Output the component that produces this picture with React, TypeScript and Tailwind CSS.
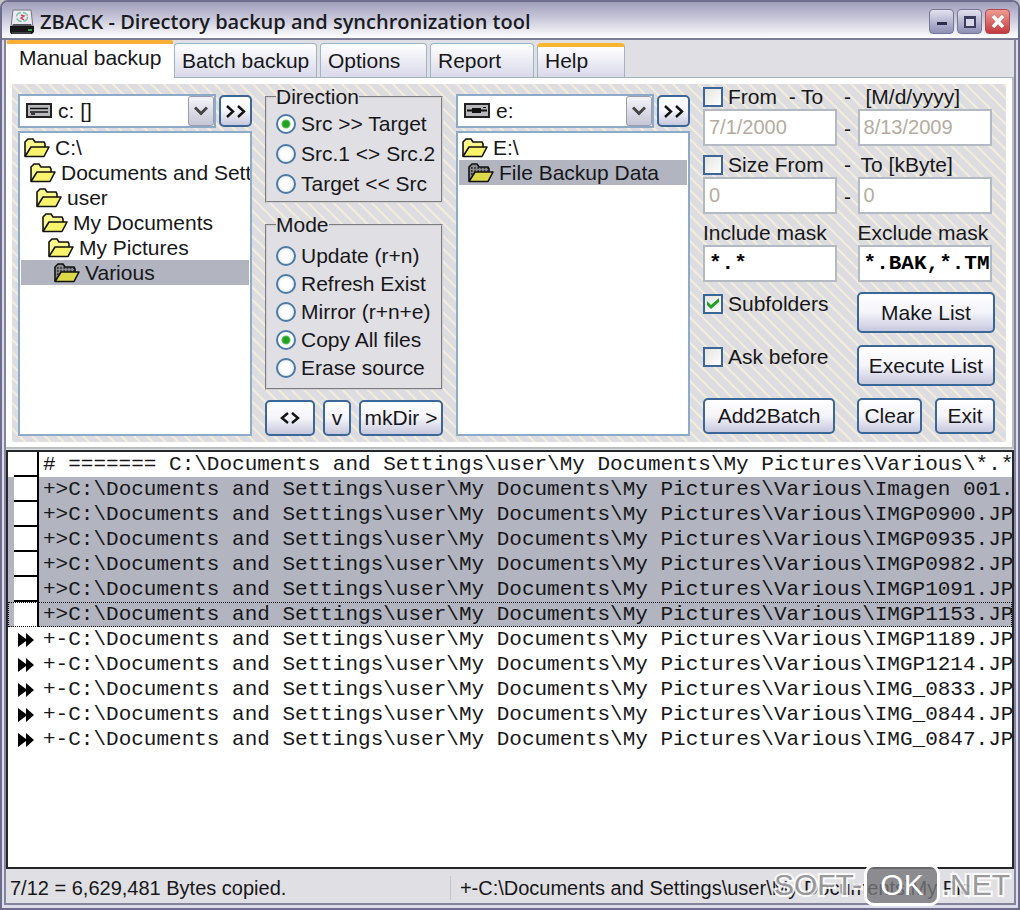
import { useState } from 'react';
import type { ReactNode } from 'react';
import clsx from 'clsx';

const TABS = [
  { name: 'Manual backup', width: 'w-[168px]' },
  { name: 'Batch backup', width: 'w-[143px]' },
  { name: 'Options', width: 'w-[107px]' },
  { name: 'Report', width: 'w-[104px]' },
  { name: 'Help', width: 'w-[88px]' },
];

const DIRECTIONS = ['Src >> Target', 'Src.1 <> Src.2', 'Target << Src'];
const MODES = ['Update (r+n)', 'Refresh Exist', 'Mirror (r+n+e)', 'Copy All files', 'Erase source'];

const SOURCE_TREE = [
  { name: 'C:\\', indent: 'pl-[3px]' },
  { name: 'Documents and Settings', indent: 'pl-[9px]' },
  { name: 'user', indent: 'pl-[15px]' },
  { name: 'My Documents', indent: 'pl-[21px]' },
  { name: 'My Pictures', indent: 'pl-[27px]' },
  { name: 'Various', indent: 'pl-[33px]', selected: true },
];

const TARGET_TREE = [
  { name: 'E:\\', indent: 'pl-[3px]' },
  { name: 'File Backup Data', indent: 'pl-[9px]', selected: true },
];

const FOLDER = 'C:\\Documents and Settings\\user\\My Documents\\My Pictures\\Various\\';

const FILES = [
  { name: 'Imagen 001.jpg', copied: true },
  { name: 'IMGP0900.JPG', copied: true },
  { name: 'IMGP0935.JPG', copied: true },
  { name: 'IMGP0982.JPG', copied: true },
  { name: 'IMGP1091.JPG', copied: true },
  { name: 'IMGP1153.JPG', copied: true, focused: true },
  { name: 'IMGP1189.JPG' },
  { name: 'IMGP1214.JPG' },
  { name: 'IMG_0833.JPG' },
  { name: 'IMG_0844.JPG' },
  { name: 'IMG_0847.JPG' },
];

type TreeItem = { name: string; indent: string; selected?: boolean };

function AppIcon() {
  return (
    <svg width="26" height="26" viewBox="0 0 26 26" className="shrink-0">
      <path d="M4 1h18l2 17H2z" fill="#eceaf0" stroke="#77757f" />
      <path d="M1 17h24v6l-2 2H2l-1-2z" fill="#17171a" />
      <path d="M3 17l1-2h18l1 2z" fill="#55555c" />
      <ellipse cx="13" cy="8" rx="5.500" ry="4.500" fill="none" stroke="#7cc4a4" strokeWidth="1.500" strokeDasharray="6 2" />
      <path d="M12 6l3 1-3 2 3 2" fill="none" stroke="#d0405a" strokeWidth="1.500" />
      <path d="M19 21h4" stroke="#3fd06a" strokeWidth="1.5" />
      <path d="M3 24h19" stroke="#65656c" />
    </svg>
  );
}

function FolderIcon({ selected }: { selected?: boolean }) {
  return (
    <svg width="26" height="20" viewBox="0 0 26 20" className="shrink-0">
      <path
        d="M1 18V4l3-3h5l2 3h9l1 2v3"
        fill={selected ? '#8b8b90' : '#fbf78a'}
        stroke="#111"
        strokeWidth="1.6"
      />
      {selected && (
        <path d="M3 5h17M3 8h18M3 11h4" stroke="#1c1c1c" strokeWidth="1.6" strokeDasharray="1.6 1.6" />
      )}
      <path
        d="M1 18.500L7 9h18l-5 9.500z"
        fill={selected ? '#dcd84a' : '#f8f36a'}
        stroke="#111"
        strokeWidth="1.6"
        strokeLinejoin="round"
      />
    </svg>
  );
}

function DriveIcon({ removable }: { removable?: boolean }) {
  return (
    <svg width="26" height="16" viewBox="0 0 26 16" className="shrink-0">
      <rect x="1" y="1" width="24" height="13" fill="#b9b9bd" stroke="#222" strokeWidth="2" />
      {removable ? (
        <path d="M3 7.500h20M7 7.500h12" stroke="#111" strokeWidth="2" />
      ) : (
        <path d="M4 5.500h18M4 9h18" stroke="#111" strokeWidth="1.6" />
      )}
      {removable ? (
        <path d="M8 5h9v5H8zM19 4h3v1h-3z" fill="#111" />
      ) : (
        <path d="M5 11h4" stroke="#111" strokeWidth="1.6" />
      )}
    </svg>
  );
}

function SkipIcon() {
  return (
    <svg width="16" height="14" viewBox="0 0 16 14">
      <path d="M0 0l8 6V0l8 7-8 7V8l-8 6z" fill="#000" />
    </svg>
  );
}

function XpButton({ children, label, className }: { children: ReactNode; label?: string; className?: string }) {
  return (
    <button
      type="button"
      aria-label={label}
      className={clsx(
        'flex items-center justify-center whitespace-nowrap rounded-[5px] border-2 border-[#3a6797] bg-linear-to-b from-white via-[#f4f4fa] to-[#c8c8de]',
        className,
      )}
    >
      {children}
    </button>
  );
}

function DrivePicker({ label, drive, removable }: { label: string; drive: string; removable?: boolean }) {
  return (
    <div className="flex h-[34px] items-center gap-[3px]">
      <div className="relative flex h-full min-w-0 flex-1 items-center border-2 border-[#8dabc9] bg-white pl-[6px]">
        <DriveIcon removable={removable} />
        <select aria-label={label} className="h-full min-w-0 flex-1 appearance-none bg-transparent pl-[6px] outline-none">
          <option>{drive}</option>
        </select>
        <span className="pointer-events-none absolute top-0 right-0 flex h-full w-[26px] items-center justify-center rounded-[3px] border border-[#9a9ab0] bg-linear-to-b from-[#f4f4f8] to-[#c6c6d6]">
          <svg width="14" height="10" viewBox="0 0 14 10">
            <path d="M1 1.500l6 6 6-6" fill="none" stroke="#444" strokeWidth="3" />
          </svg>
        </span>
      </div>
      <XpButton label="Browse" className="h-[32px] w-[33px]">
        <svg width="20" height="13" viewBox="0 0 20 13">
          <path d="M1 1l6 5.500L1 12M12 1l6 5.500-6 5.500" fill="none" stroke="#111" strokeWidth="2.400" />
        </svg>
      </XpButton>
    </div>
  );
}

function FolderTree({ items }: { items: TreeItem[] }) {
  return (
    <ul className="flex-1 overflow-hidden border-2 border-[#8dabc9] bg-white px-[1px] pt-[2px]">
      {items.map((item) => (
        <li
          key={item.name}
          className={clsx(
            'flex h-[25px] items-center gap-[5px] whitespace-nowrap',
            item.indent,
            item.selected && 'bg-[#b2b4bf]',
          )}
        >
          <FolderIcon selected={item.selected} />
          {item.name}
        </li>
      ))}
    </ul>
  );
}

function RadioGroup({ title, name, options, initial, className }: {
  title: string;
  name: string;
  options: string[];
  initial: string;
  className: string;
}) {
  const [value, setValue] = useState(initial);

  return (
    <fieldset className="min-w-0 border-2 border-[#cfcfd4] bg-[#e0dfe4] pl-[9px] [border-style:groove]">
      <legend className="leading-[24px]">{title}</legend>
      <div className={clsx('flex flex-col', className)}>
        {options.map((option) => (
          <label key={option} className="flex h-[24px] items-center gap-[5px] whitespace-nowrap">
            <input
              type="radio"
              name={name}
              checked={value === option}
              onChange={() => setValue(option)}
              className="size-[20px] shrink-0 appearance-none rounded-full border-2 border-[#4a7ba8] bg-[radial-gradient(circle,#fff_0_5px,#e6e6e6_9px)] checked:bg-[radial-gradient(circle,#22a022_0_3px,#5cc05c_4px,#fff_5px)]"
            />
            {option}
          </label>
        ))}
      </div>
    </fieldset>
  );
}

function CheckBox({ label, defaultChecked }: { label: string; defaultChecked?: boolean }) {
  return (
    <label className="relative flex h-[24px] items-center gap-[5px] whitespace-pre">
      <input
        type="checkbox"
        defaultChecked={defaultChecked}
        className="peer size-[20px] shrink-0 appearance-none border-2 border-[#3a6797] bg-linear-to-br from-[#e4e4e0] to-white"
      />
      <svg
        width="12"
        height="12"
        viewBox="0 0 12 12"
        className="pointer-events-none invisible absolute left-[4px] peer-checked:visible"
      >
        <path d="M0 3v4l4 4 8-7V0L4 7z" fill="#21a121" />
      </svg>
      {label}
    </label>
  );
}

function Field({ label, value, disabled }: { label: string; value: string; disabled?: boolean }) {
  return (
    <input
      type="text"
      aria-label={label}
      defaultValue={value}
      disabled={disabled}
      className={clsx(
        'h-[37px] w-full min-w-0 border-2 border-[#b3bac4] bg-white pl-[4px] outline-none',
        disabled
          ? 'text-[20px] text-[#b5aca0]'
          : 'font-["Liberation_Mono",monospace] text-[21px] font-bold text-black',
      )}
    />
  );
}

function Filters() {
  return (
    <div className="flex min-w-0 flex-col gap-[10px] pt-[1px]">
      <div className="grid grid-cols-[134fr_20fr_134fr] pr-[3px]">
        <CheckBox label="From  - To" />
        <span className="text-center">-</span>
        <span className="pl-[8px]">[M/d/yyyy]</span>
        <Field label="Date from" value="7/1/2000" disabled />
        <span className="pt-[8px] text-center">-</span>
        <Field label="Date to" value="8/13/2009" disabled />

        <div className="mt-[7px]">
          <CheckBox label="Size From" />
        </div>
        <span className="mt-[7px] text-center">-</span>
        <span className="mt-[7px] pl-[3px]">To [kByte]</span>
        <Field label="Size from" value="0" disabled />
        <span className="pt-[8px] text-center">-</span>
        <Field label="Size to" value="0" disabled />

        <span className="mt-[7px] whitespace-nowrap">Include mask</span>
        <span />
        <span className="mt-[7px] whitespace-nowrap">Exclude mask</span>
        <Field label="Include mask" value="*.*" />
        <span />
        <Field label="Exclude mask" value="*.BAK,*.TMP" />
      </div>

      <div className="grid grid-cols-[154fr_138fr] gap-y-[12px]">
        <CheckBox label="Subfolders" defaultChecked />
        <XpButton className="h-[41px]">Make List</XpButton>
        <CheckBox label="Ask before" />
        <XpButton className="h-[41px]">Execute List</XpButton>
        <XpButton className="mr-[22px] h-[36px]">Add2Batch</XpButton>
        <div className="flex justify-between">
          <XpButton className="h-[36px] w-[65px]">Clear</XpButton>
          <XpButton className="h-[36px] w-[60px]">Exit</XpButton>
        </div>
      </div>
    </div>
  );
}

function TitleBar() {
  return (
    <header className="flex h-[38px] shrink-0 items-center gap-[5px] border-b-2 border-[#7c7b98] bg-linear-to-b from-[#9f9eba] via-[#cdccdd] to-white pt-[3px] pr-[8px] pl-[7px]">
      <AppIcon />
      <h1 className='flex-1 truncate font-["Open_Sans",sans-serif] text-[20px] leading-[28px] font-semibold text-[#1b1b22]'>
        ZBACK - Directory backup and synchronization tool
      </h1>
      <div className="flex gap-[3px]">
        <button
          type="button"
          aria-label="Minimize"
          className="flex size-[25px] items-center justify-center rounded-[4px] border border-[#77779a] bg-linear-to-b from-[#e2e2ee] to-[#8f90b5]"
        >
          <span className="mt-[4px] h-[3px] w-[10px] bg-[#2c2c4c]" />
        </button>
        <button
          type="button"
          aria-label="Maximize"
          className="flex size-[25px] items-center justify-center rounded-[4px] border border-[#77779a] bg-linear-to-b from-[#e2e2ee] to-[#8f90b5]"
        >
          <span className="size-[12px] border-2 border-t-3 border-[#3c3c5e] bg-[#d8d8ea]" />
        </button>
        <button
          type="button"
          aria-label="Close"
          className="flex size-[25px] items-center justify-center rounded-[4px] border border-[#b04a50] bg-linear-to-b from-[#ec9b92] to-[#c23840]"
        >
          <svg width="14" height="13" viewBox="0 0 14 13">
            <path d="M2 1l10 11M12 1L2 12" stroke="#fff" strokeWidth="3.500" />
          </svg>
        </button>
      </div>
    </header>
  );
}

function TabBar() {
  const [active, setActive] = useState('Manual backup');

  return (
    <nav role="tablist" className="flex h-[38px] shrink-0 items-end gap-[3px] border-b border-[#a4b4b8]">
      {TABS.map((tab) => {
        const isActive = tab.name === active;
        return (
          <button
            key={tab.name}
            type="button"
            role="tab"
            aria-selected={isActive}
            onClick={() => setActive(tab.name)}
            className={clsx(
              'rounded-t-[4px] border border-b-0 text-left whitespace-nowrap',
              tab.width,
              isActive
                ? '-mr-[3px] -mb-[1px] h-[38px] border-t-4 border-white border-t-[#f9ae35] bg-white pb-[7px] pl-[12px]'
                : 'h-[34px] border-[#9fb4c4] bg-linear-to-b from-white to-[#d9d9ea] pl-[7px]',
              tab.name === 'Help' && 'border-t-4 border-t-[#fcb52c] pb-[3px]',
            )}
          >
            {tab.name}
          </button>
        );
      })}
    </nav>
  );
}

function FileList() {
  return (
    <ul className='flex-1 overflow-hidden border-2 border-[#26262a] bg-white font-["Liberation_Mono",monospace] text-[21px] leading-[25px] whitespace-pre'>
      <li className="flex h-[25px]">
        <span className="ml-[6px] w-[25px] shrink-0 border-r-2 border-b-2 border-black" />
        <span className="pl-[4px]"># ======= {FOLDER}*.*</span>
      </li>
      {FILES.map((file) => (
        <li
          key={file.name}
          className={clsx('relative flex h-[25px]', file.copied && 'bg-[#b2b4bf]')}
        >
          {file.copied ? (
            <span
              className={clsx(
                'ml-[6px] w-[25px] shrink-0 border-r-2 border-black bg-white',
                !file.focused && 'border-b-2',
              )}
            />
          ) : (
            <span className="flex w-[31px] shrink-0 items-center pl-[10px]">
              <SkipIcon />
            </span>
          )}
          <span className="pl-[4px]">
            {file.copied ? '+>' : '+-'}
            {FOLDER}
            {file.name}
          </span>
          {file.focused && <span className="absolute inset-0 border border-dotted border-black" />}
        </li>
      ))}
    </ul>
  );
}

function StatusBar() {
  return (
    <footer className="grid h-[34px] shrink-0 grid-cols-[443fr_563fr] items-center pt-[3px] text-[20px] whitespace-nowrap">
      <span className="overflow-hidden pl-[4px]">7/12 = 6,629,481 Bytes copied.</span>
      <span className="overflow-hidden border-l border-[#c4c3c8] pl-[9px]">
        +-C:\Documents and Settings\user\My Documents\My Pic
      </span>
    </footer>
  );
}

function Watermark() {
  return (
    <div className="pointer-events-none absolute right-[10px] bottom-[4px] flex items-center text-[30px] leading-[36px]">
      <span className="text-[#808084]/80 [-webkit-text-stroke:4px_#ffffffdd] [paint-order:stroke_fill]">SOFT-</span>
      <span className="mx-[2px] rounded-[10px] border-3 border-white bg-[#77777a]/80 px-[13px] text-white">OK</span>
      <span className="text-[#808084]/80 [-webkit-text-stroke:4px_#ffffffdd] [paint-order:stroke_fill]">.NET</span>
    </div>
  );
}

export default function App() {
  return (
    <div className='relative flex min-h-screen flex-col overflow-hidden bg-[#c6c6c8] font-["Liberation_Sans",Arial,sans-serif] text-[21px] leading-[24px] text-[#17171a]'>
      <div className="flex flex-1 flex-col overflow-hidden rounded-t-[8px] border-2 border-[#6d6c8c] bg-[#dddcea]">
        <TitleBar />
        <div className="mx-[2px] mb-[3px] flex flex-1 flex-col border-2 border-t-0 border-[#85849f] bg-[#e0dfe3]">
          <TabBar />
          <main className="border-r-2 border-b-2 border-[#b9bfbe] bg-white p-[6px] pb-[5px]">
            <div className="grid grid-cols-[234fr_178fr_234fr_292fr] gap-x-[13px] bg-[repeating-linear-gradient(45deg,#f3eddb_0_1px,#dddde1_2px_8px,#f3eddb_9px)] pr-[11px] pb-[6px] pl-[6px]">
              <section className="flex min-w-0 flex-col gap-[3px] pt-[10px]">
                <DrivePicker label="Source drive" drive="c: []" />
                <FolderTree items={SOURCE_TREE} />
              </section>

              <section className="flex min-w-0 flex-col gap-[10px] pt-[1px]">
                <RadioGroup
                  title="Direction"
                  name="direction"
                  options={DIRECTIONS}
                  initial="Src >> Target"
                  className="gap-[6px] pt-[3px] pb-[5px]"
                />
                <RadioGroup
                  title="Mode"
                  name="mode"
                  options={MODES}
                  initial="Copy All files"
                  className="gap-[4px] pt-[7px] pb-[8px]"
                />
                <div className="mt-auto flex justify-between">
                  <XpButton label="Swap source and target" className="h-[36px] w-[50px]">
                    <svg width="20" height="12" viewBox="0 0 20 12">
                      <path d="M8 1L2 6l6 5M12 1l6 5-6 5" fill="none" stroke="#111" strokeWidth="2.400" />
                    </svg>
                  </XpButton>
                  <XpButton className="h-[36px] w-[28px]">v</XpButton>
                  <XpButton className="h-[36px] w-[84px]">mkDir &gt;</XpButton>
                </div>
              </section>

              <section className="flex min-w-0 flex-col gap-[3px] pt-[10px]">
                <DrivePicker label="Target drive" drive="e:" removable />
                <FolderTree items={TARGET_TREE} />
              </section>

              <Filters />
            </div>
          </main>
          <div className="mt-[1px] flex flex-1 flex-col">
            <FileList />
          </div>
          <StatusBar />
        </div>
      </div>
      <Watermark />
    </div>
  );
}
